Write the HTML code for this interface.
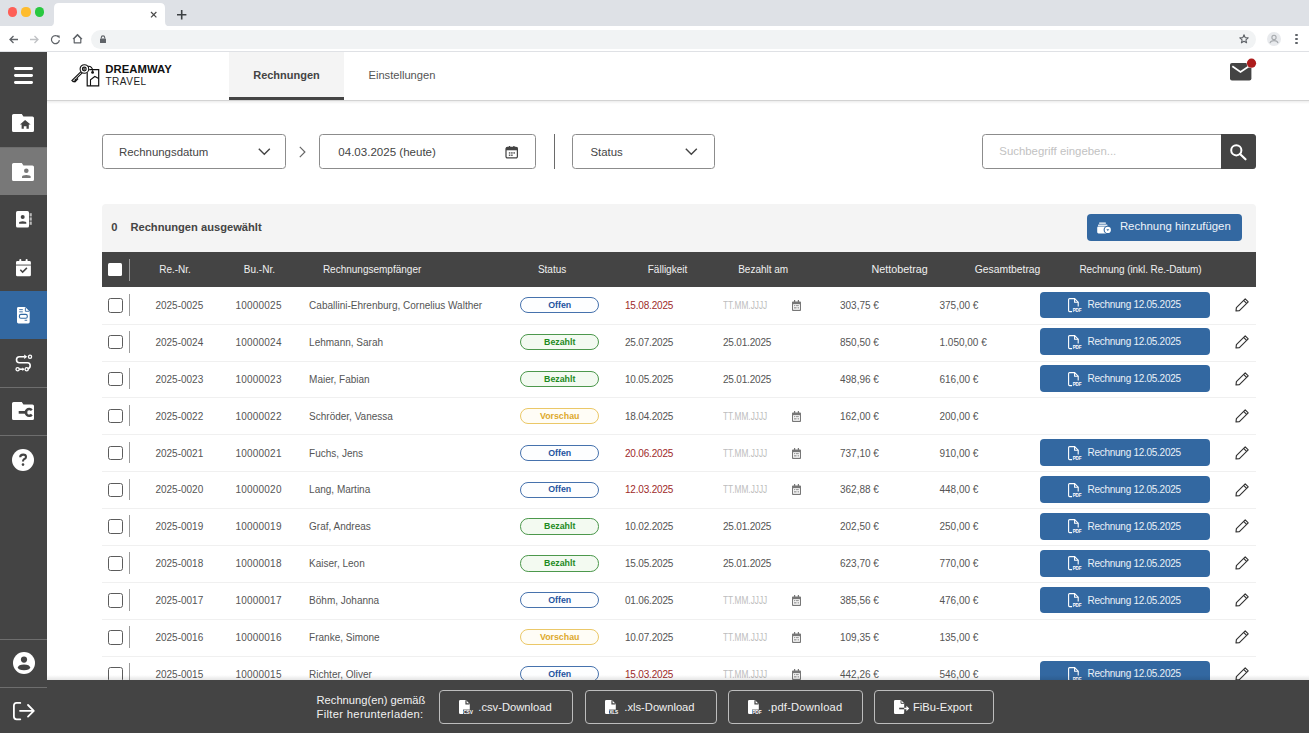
<!DOCTYPE html>
<html><head><meta charset="utf-8"><style>
*{box-sizing:border-box;margin:0;padding:0}
html,body{width:1309px;height:733px;overflow:hidden;background:#fff;font-family:"Liberation Sans",sans-serif;color:#444}
body{position:relative}
.a{position:absolute}
.t{position:absolute;white-space:nowrap;line-height:1}
svg{overflow:visible}
</style></head><body>
<div class="a" style="left:0px;top:0px;width:1309px;height:26px;background:#dee1e6"></div>
<div class="a" style="left:0px;top:26px;width:1309px;height:26px;background:#fff;border-bottom:1px solid #dfe1e5"></div>
<div class="a" style="left:7.800000000000001px;top:7.4px;width:9.2px;height:9.2px;background:#fe5f57;border-radius:50%"></div>
<div class="a" style="left:21.4px;top:7.4px;width:9.2px;height:9.2px;background:#febc2e;border-radius:50%"></div>
<div class="a" style="left:35.3px;top:7.4px;width:9.2px;height:9.2px;background:#28c840;border-radius:50%"></div>
<svg class="a" style="left:46px;top:3px;" width="127" height="24" viewBox="0 0 127 24"><path d="M3 23.5Q8 23.5 8 18.5V5Q8 0 13 0H114Q119 0 119 5V18.5Q119 23.5 124 23.5V24H3Z" fill="#fff"/></svg>
<svg class="a" style="left:151.1px;top:11.7px;" width="5.4" height="5.4" viewBox="0 0 5.4 5.4"><path d="M0 0L5.4 5.4M5.4 0L0 5.4" stroke="#4a4a4a" stroke-width="1.2"/></svg>
<svg class="a" style="left:177px;top:9.8px;" width="9.4" height="9.4" viewBox="0 0 9.4 9.4"><path d="M4.7 0V9.4M0 4.7H9.4" stroke="#3c4043" stroke-width="1.6"/></svg>
<svg class="a" style="left:8.5px;top:34.5px;" width="9" height="9" viewBox="0 0 9 9"><path d="M9 4.5H1M4.5 1L1 4.5L4.5 8" stroke="#5f6368" stroke-width="1.3" fill="none"/></svg>
<svg class="a" style="left:29.5px;top:34.5px;" width="9" height="9" viewBox="0 0 9 9"><path d="M0 4.5H8M4.5 1L8 4.5L4.5 8" stroke="#c0c2c5" stroke-width="1.3" fill="none"/></svg>
<svg class="a" style="left:51px;top:34.7px;" width="9" height="9" viewBox="0 0 9 9"><path d="M7.6 2.2A4 4 0 1 0 8.4 5.2" stroke="#5f6368" stroke-width="1.2" fill="none"/><path d="M5.6 0.4L8.6 0.4L8.6 3.4Z" fill="#5f6368"/></svg>
<svg class="a" style="left:72.5px;top:34.2px;" width="9" height="9.5" viewBox="0 0 9 9.5"><path d="M1.2 4.4L4.5 1L7.8 4.4V8.8H1.2Z" stroke="#5f6368" stroke-width="1.2" fill="none" stroke-linejoin="round"/><path d="M0 5.2L4.5 0.6L9 5.2" stroke="#5f6368" stroke-width="1.2" fill="none"/></svg>
<div class="a" style="left:91px;top:30px;width:1165px;height:19px;background:#f1f3f4;border-radius:9.5px"></div>
<svg class="a" style="left:99.5px;top:35px;" width="6" height="8" viewBox="0 0 6 8"><path d="M1.3 3.6V2.6A1.7 1.7 0 0 1 4.7 2.6V3.6" stroke="#5f6368" stroke-width="1.1" fill="none"/><rect x="0" y="3.4" width="6" height="4.6" rx="0.6" fill="#5f6368"/></svg>
<svg class="a" style="left:1238.8px;top:34px;" width="10" height="10" viewBox="0 0 10 10"><path d="M5 0.8L6.2 3.6L9.2 3.8L6.9 5.8L7.6 8.8L5 7.2L2.4 8.8L3.1 5.8L0.8 3.8L3.8 3.6Z" stroke="#5f6368" stroke-width="1.1" fill="none" stroke-linejoin="round"/></svg>
<div class="a" style="left:1267.4px;top:32px;width:14px;height:14px;background:#e8eaed;border-radius:50%"></div>
<svg class="a" style="left:1269.4px;top:34px;" width="10" height="10" viewBox="0 0 10 10"><circle cx="5" cy="3.4" r="2.1" stroke="#a6a9ad" stroke-width="1.1" fill="none"/><path d="M1 9.2Q1.5 6.6 5 6.6Q8.5 6.6 9 9.2" stroke="#a6a9ad" stroke-width="1.1" fill="none"/></svg>
<div class="a" style="left:1295.4px;top:34.3px;width:2.2px;height:2.2px;background:#5f6368;border-radius:50%"></div>
<div class="a" style="left:1295.4px;top:38.1px;width:2.2px;height:2.2px;background:#5f6368;border-radius:50%"></div>
<div class="a" style="left:1295.4px;top:41.9px;width:2.2px;height:2.2px;background:#5f6368;border-radius:50%"></div>
<div class="a" style="left:47px;top:52px;width:1262px;height:48px;background:#fff"></div>
<div class="a" style="left:47px;top:100px;width:1262px;height:1px;background:#d3d3d3"></div>
<div class="a" style="left:47px;top:101px;width:1262px;height:3px;background:linear-gradient(rgba(0,0,0,.07),rgba(0,0,0,0))"></div>
<svg class="a" style="left:71px;top:63.8px;" width="29" height="23" viewBox="0 0 29 23"><path d="M16.2 21.8V5.6H27.7V21.8Z" fill="none" stroke="#111" stroke-width="1.2"/><circle cx="13.4" cy="5" r="4.9" fill="#fff"/><g fill="none" stroke="#111" stroke-width="1.1"><circle cx="13.4" cy="5" r="4.3"/><circle cx="13.3" cy="5" r="1.9"/><path d="M12.2 3.9L14.4 6.1M14.4 3.9L12.2 6.1" stroke-width="0.8"/><path d="M10 7.6L0.9 16.5L2.2 17.8L3 17L3.9 17.9L4.9 16.9L4 16L4.8 15.2L5.7 16.1L6.7 15.1L5.8 14.2L11.2 8.8"/><path d="M16.8 2.3Q21 1.8 21.8 6.8"/><path d="M19.5 21.8V15.8L23.8 12.5L27.7 14.4"/></g><circle cx="21.6" cy="8.4" r="1.4" fill="#111"/></svg>
<div class="t" style="left:105.3px;top:63.93px;font-size:11.3px;color:#111;font-weight:700;letter-spacing:0.05px">DREAMWAY</div>
<div class="t" style="left:105.5px;top:76.83px;font-size:10px;color:#222;font-weight:400;letter-spacing:0.5px">TRAVEL</div>
<div class="a" style="left:229px;top:52px;width:115px;height:45px;background:#f4f4f4"></div>
<div class="a" style="left:229px;top:97px;width:115px;height:3px;background:#444"></div>
<div class="t" style="left:253.2px;top:69.69px;font-size:11px;color:#444;font-weight:700">Rechnungen</div>
<div class="t" style="left:368.5px;top:69.56px;font-size:11.15px;color:#555;font-weight:400">Einstellungen</div>
<svg class="a" style="left:1230.1px;top:63.2px;" width="22" height="18" viewBox="0 0 22 18"><rect x="0" y="0" width="21.4" height="17.5" rx="2" fill="#444"/><path d="M2.3 3.3L10.5 9L19 3.3" stroke="#fff" stroke-width="1.8" fill="none"/><circle cx="21.5" cy="0.2" r="4.9" fill="#fff"/><circle cx="21.5" cy="0.2" r="4.6" fill="#ad1c1c"/></svg>
<div class="a" style="left:0px;top:52px;width:47px;height:681px;background:#444444"></div>
<div class="a" style="left:13.7px;top:67.05000000000001px;width:19.3px;height:2.7px;background:#fff;border-radius:1.4px"></div>
<div class="a" style="left:13.7px;top:73.95px;width:19.3px;height:2.7px;background:#fff;border-radius:1.4px"></div>
<div class="a" style="left:13.7px;top:81.05000000000001px;width:19.3px;height:2.7px;background:#fff;border-radius:1.4px"></div>
<svg class="a" style="left:12.3px;top:114.1px;" width="22" height="18" viewBox="0 0 22 18"><path d="M1.6 0H9.8L11.4 2.5H20.4A1.6 1.6 0 0 1 22 4.1V16.4A1.6 1.6 0 0 1 20.4 18H1.6A1.6 1.6 0 0 1 0 16.4V1.6A1.6 1.6 0 0 1 1.6 0Z" fill="#fff"/><path d="M13.1 10.5L8 10.5L13.1 5.9L18.6 10.5H16.8V14.8H14.5V12.2H11.8V14.8H9.6V10.5" fill="#444444"/></svg>
<div class="a" style="left:0px;top:147px;width:47px;height:1px;background:#6e6e6e"></div>
<div class="a" style="left:0px;top:148px;width:47px;height:47px;background:#787878"></div>
<svg class="a" style="left:12.3px;top:163.1px;" width="22" height="18" viewBox="0 0 22 18"><path d="M1.6 0H9.8L11.4 2.5H20.4A1.6 1.6 0 0 1 22 4.1V16.4A1.6 1.6 0 0 1 20.4 18H1.6A1.6 1.6 0 0 1 0 16.4V1.6A1.6 1.6 0 0 1 1.6 0Z" fill="#fff"/><circle cx="14.3" cy="7.8" r="2.3" fill="#787878"/><path d="M10 14.9V13.6Q10 11.9 14.3 11.9Q18.6 11.9 18.6 13.6V14.9Z" fill="#787878"/></svg>
<svg class="a" style="left:16.1px;top:210.9px;" width="16" height="17" viewBox="0 0 16 17"><rect x="0" y="0" width="13" height="16.6" rx="1.6" fill="#fff"/><circle cx="6.7" cy="6.1" r="2" fill="#444444"/><path d="M3.1 12.7V11.7Q3.1 10.2 6.7 10.2Q10.3 10.2 10.3 11.7V12.7Z" fill="#444444"/><rect x="13.6" y="2.2" width="2.2" height="3.2" fill="#b9b9b9"/><rect x="13.6" y="6.4" width="2.2" height="3.2" fill="#b9b9b9"/><rect x="13.6" y="10.6" width="2.2" height="3.2" fill="#b9b9b9"/></svg>
<svg class="a" style="left:15.9px;top:258.6px;" width="15" height="17.5" viewBox="0 0 15 17.5"><path d="M1.4 2H13.5A1.4 1.4 0 0 1 14.9 3.4V15.9A1.4 1.4 0 0 1 13.5 17.3H1.4A1.4 1.4 0 0 1 0 15.9V3.4A1.4 1.4 0 0 1 1.4 2Z" fill="#fff"/><rect x="3.3" y="0" width="2" height="3.5" rx="1" fill="#fff"/><rect x="9.6" y="0" width="2" height="3.5" rx="1" fill="#fff"/><rect x="0" y="5.6" width="14.9" height="0.9" fill="#444444"/><path d="M4.3 10.8L6.6 13.1L10.9 8.9" stroke="#444444" stroke-width="1.5" fill="none"/></svg>
<div class="a" style="left:0px;top:291px;width:47px;height:48px;background:#3368a1"></div>
<svg class="a" style="left:16.8px;top:306.9px;" width="12.7" height="16.6" viewBox="0 0 12.7 16.6"><path d="M1.5 0H8.2L12.7 4.5V15.1A1.5 1.5 0 0 1 11.2 16.6H1.5A1.5 1.5 0 0 1 0 15.1V1.5A1.5 1.5 0 0 1 1.5 0Z" fill="#fff"/><path d="M8.4 0.6V4.3H12.1" stroke="#3368a1" stroke-width="0.9" fill="none"/><rect x="2.2" y="2.2" width="3.6" height="0.9" fill="#3368a1"/><rect x="2.2" y="4.4" width="3.6" height="0.9" fill="#3368a1"/><rect x="2.4" y="7.4" width="7.9" height="3.8" rx="1.5" stroke="#3368a1" stroke-width="1.1" fill="none"/><rect x="7.6" y="12.8" width="2.6" height="0.9" fill="#3368a1"/></svg>
<svg class="a" style="left:14.6px;top:354.2px;" width="18" height="18" viewBox="0 0 18 18"><g stroke="#fff" stroke-width="1.6" fill="none"><path d="M9.5 2.8H4.5Q1.5 2.8 1.5 5.8Q1.5 8.8 4.5 8.8H12.5Q15.2 8.8 15.2 11.8Q15.2 14.4 12.5 15"/><circle cx="15" cy="2.8" r="1.6" stroke-width="1.3"/><circle cx="2.6" cy="15.2" r="1.6" stroke-width="1.3"/><circle cx="11.7" cy="15.2" r="1.6" stroke-width="1.3"/><path d="M4.2 15.2H8.2"/></g><path d="M9.2 0.6L12.2 2.8L9.2 5Z" fill="#fff"/><path d="M7.4 13.4L9.6 15.2L7.4 17Z" fill="#fff"/></svg>
<div class="a" style="left:0px;top:387px;width:47px;height:1px;background:#6e6e6e"></div>
<svg class="a" style="left:12.3px;top:402.1px;" width="22" height="18" viewBox="0 0 22 18"><path d="M1.6 0H9.8L11.4 2.5H20.4A1.6 1.6 0 0 1 22 4.1V16.4A1.6 1.6 0 0 1 20.4 18H1.6A1.6 1.6 0 0 1 0 16.4V1.6A1.6 1.6 0 0 1 1.6 0Z" fill="#fff"/><rect x="6.7" y="9" width="8.6" height="2.7" fill="#444444"/><path d="M19.8 8.2A3.4 3.4 0 1 0 19.8 12.6" stroke="#444444" stroke-width="2.4" fill="none"/></svg>
<div class="a" style="left:0px;top:435px;width:47px;height:1px;background:#6e6e6e"></div>
<svg class="a" style="left:12.3px;top:449.1px;" width="22" height="22" viewBox="0 0 22 22"><circle cx="11" cy="11" r="11" fill="#fff"/><path d="M8.2 8.2Q8.2 5.6 11.2 5.6Q14 5.6 14 7.9Q14 9.5 11.9 10.3Q11 10.8 11 12.6" stroke="#444444" stroke-width="2.1" fill="none"/><circle cx="11" cy="15.6" r="1.3" fill="#444444"/></svg>
<div class="a" style="left:0px;top:639px;width:47px;height:1px;background:#6e6e6e"></div>
<svg class="a" style="left:12.5px;top:652px;" width="22" height="22" viewBox="0 0 22 22"><circle cx="11" cy="11" r="11" fill="#fff"/><circle cx="11" cy="7.6" r="3.1" fill="#444444"/><path d="M4.8 15.6Q5.4 12.4 11 12.4Q16.6 12.4 17.2 15.6Q16.6 18.2 11 18.2Q5.4 18.2 4.8 15.6Z" fill="#444444"/></svg>
<div class="a" style="left:0px;top:687px;width:47px;height:1px;background:#6e6e6e"></div>
<svg class="a" style="left:12.7px;top:702.3px;" width="22" height="18.5" viewBox="0 0 22 18.5"><g stroke="#fff" stroke-width="1.8" fill="none" stroke-linecap="round" stroke-linejoin="round"><path d="M7.3 0.9H3.6Q0.9 0.9 0.9 3.6V14.6Q0.9 17.3 3.6 17.3H7.3"/><path d="M7 8.8H20.6M15 3L20.8 8.8L15 14.6"/></g></svg>
<div class="a" style="left:102px;top:134px;width:184px;height:35px;border:1px solid #8c8c8c;border-radius:3.5px"></div>
<div class="t" style="left:119px;top:146.65px;font-size:11.4px;color:#444;font-weight:400">Rechnungsdatum</div>
<svg class="a" style="left:258px;top:147.5px;" width="12.6" height="7" viewBox="0 0 12.6 7"><path d="M0.8 0.8L6.3 6.2L11.8 0.8" stroke="#444" stroke-width="1.4" fill="none"/></svg>
<svg class="a" style="left:298.5px;top:145.5px;" width="7" height="12" viewBox="0 0 7 12"><path d="M0.8 0.8L5.9 6L0.8 11.2" stroke="#666" stroke-width="1.2" fill="none"/></svg>
<div class="a" style="left:319px;top:134px;width:217px;height:35px;border:1px solid #8c8c8c;border-radius:3.5px"></div>
<div class="t" style="left:338.3px;top:146.52px;font-size:11.55px;color:#444;font-weight:400">04.03.2025 (heute)</div>
<svg class="a" style="left:506.3px;top:145.9px;" width="12" height="12.5" viewBox="0 0 12 12.5"><g transform="scale(0.95)"><path d="M1.5 1.5H10.5A1.5 1.5 0 0 1 12 3V11A1.5 1.5 0 0 1 10.5 12.5H1.5A1.5 1.5 0 0 1 0 11V3A1.5 1.5 0 0 1 1.5 1.5Z" stroke="#444" stroke-width="1.3" fill="none"/><rect x="0" y="1.5" width="12" height="3" fill="#444"/><rect x="3" y="0" width="1.4" height="2.5" fill="#444"/><rect x="7.6" y="0" width="1.4" height="2.5" fill="#444"/><rect x="3" y="6.6" width="1.6" height="1.4" fill="#444"/><rect x="5.4" y="6.6" width="1.6" height="1.4" fill="#444"/><rect x="7.8" y="6.6" width="1.6" height="1.4" fill="#444"/><rect x="3" y="9" width="1.6" height="1.4" fill="#444"/><rect x="5.4" y="9" width="1.6" height="1.4" fill="#444"/></g></svg>
<div class="a" style="left:554px;top:134px;width:1px;height:35px;background:#6a6a6a"></div>
<div class="a" style="left:572px;top:134px;width:143px;height:35px;border:1px solid #8c8c8c;border-radius:3.5px"></div>
<div class="t" style="left:590.5px;top:146.65px;font-size:11.4px;color:#444;font-weight:400">Status</div>
<svg class="a" style="left:684.5px;top:147.5px;" width="12.6" height="7" viewBox="0 0 12.6 7"><path d="M0.8 0.8L6.3 6.2L11.8 0.8" stroke="#444" stroke-width="1.4" fill="none"/></svg>
<div class="a" style="left:982px;top:134px;width:274px;height:35px;border:1px solid #8c8c8c;border-radius:3.5px;overflow:hidden"></div>
<div class="a" style="left:1221px;top:134px;width:35px;height:35px;background:#444;border-radius:0 3.5px 3.5px 0"></div>
<div class="t" style="left:999.3px;top:146.45px;font-size:11.4px;color:#c2c2c2;font-weight:400">Suchbegriff eingeben...</div>
<svg class="a" style="left:1230px;top:144px;" width="16.5" height="16" viewBox="0 0 16.5 16"><circle cx="6.3" cy="6.3" r="5.1" stroke="#fff" stroke-width="2" fill="none"/><path d="M10 10L15.5 15.3" stroke="#fff" stroke-width="2.2" stroke-linecap="round"/></svg>
<div class="a" style="left:102px;top:203.5px;width:1154px;height:48.5px;background:#f4f4f4;border-radius:4px 4px 0 0"></div>
<div class="t" style="left:111.2px;top:222.12px;font-size:11.2px;color:#444;font-weight:700">0</div>
<div class="t" style="left:130.4px;top:222.16px;font-size:11.15px;color:#444;font-weight:700">Rechnungen ausgewählt</div>
<div class="a" style="left:1087px;top:213.8px;width:155px;height:27.2px;background:#3368a1;border-radius:4px"></div>
<svg class="a" style="left:1096.8px;top:221.6px;" width="15" height="12" viewBox="0 0 15 12"><rect x="2" y="0.4" width="7" height="1.3" rx="0.6" fill="#fff"/><rect x="1" y="2.5" width="9.5" height="1.5" rx="0.6" fill="#dfe8f2"/><rect x="0.2" y="4.4" width="10" height="7" rx="1.3" fill="#fff"/><circle cx="10.8" cy="7.9" r="4.2" fill="#3368a1"/><circle cx="10.8" cy="7.9" r="3.1" fill="#fff"/><path d="M9.3 7.2H12.3L10.8 9.1Z" fill="#3368a1"/></svg>
<div class="t" style="left:1119.9px;top:220.85px;font-size:11.4px;color:#eef3f9;font-weight:400">Rechnung hinzufügen</div>
<div class="a" style="left:102px;top:252px;width:1154px;height:35px;background:#444"></div>
<div class="a" style="left:108.3px;top:262.7px;width:14.2px;height:13px;background:#fff;border-radius:1.5px"></div>
<div class="a" style="left:129.2px;top:259px;width:1px;height:21.7px;background:#9a9a9a"></div>
<div class="t" style="left:175px;top:264.84px;font-size:10px;color:#f0f0f0;font-weight:400;transform:translateX(-50%)">Re.-Nr.</div>
<div class="t" style="left:259.4px;top:264.84px;font-size:10px;color:#f0f0f0;font-weight:400;transform:translateX(-50%)">Bu.-Nr.</div>
<div class="t" style="left:372.1px;top:264.84px;font-size:10px;color:#f0f0f0;font-weight:400;transform:translateX(-50%)">Rechnungsempfänger</div>
<div class="t" style="left:552.1px;top:264.84px;font-size:10px;color:#f0f0f0;font-weight:400;transform:translateX(-50%)">Status</div>
<div class="t" style="left:667.5px;top:264.84px;font-size:10px;color:#f0f0f0;font-weight:400;transform:translateX(-50%)">Fälligkeit</div>
<div class="t" style="left:763.2px;top:264.84px;font-size:10px;color:#f0f0f0;font-weight:400;transform:translateX(-50%)">Bezahlt am</div>
<div class="t" style="left:899.7px;top:264.20px;font-size:10.75px;color:#f0f0f0;font-weight:400;transform:translateX(-50%)">Nettobetrag</div>
<div class="t" style="left:1007.6px;top:264.54px;font-size:10.35px;color:#f0f0f0;font-weight:400;transform:translateX(-50%)">Gesamtbetrag</div>
<div class="t" style="left:1140.5px;top:264.84px;font-size:10px;color:#f0f0f0;font-weight:400;transform:translateX(-50%);letter-spacing:-0.07px">Rechnung (inkl. Re.-Datum)</div>
<div class="a" style="left:102px;top:323.6px;width:1154px;height:1px;background:#f0f0f0"></div>
<div class="a" style="left:108.2px;top:298.0px;width:14.4px;height:14.5px;border:1.5px solid #5c5c5c;border-radius:2.6px"></div>
<div class="a" style="left:129.3px;top:294.0px;width:1px;height:21.7px;background:#9c9c9c"></div>
<div class="t" style="left:179.3px;top:300.94px;font-size:10px;color:#555;font-weight:400;transform:translateX(-50%)">2025-0025</div>
<div class="t" style="left:258.6px;top:300.94px;font-size:10px;color:#555;font-weight:400;transform:translateX(-50%);letter-spacing:0.2px">10000025</div>
<div class="t" style="left:309.1px;top:300.94px;font-size:10px;color:#555;font-weight:400">Caballini-Ehrenburg, Cornelius Walther</div>
<div class="a" style="left:519.9px;top:297.00px;width:79.6px;height:16.3px;border:1px solid #4672ad;border-radius:8.2px;background:#fdfeff"></div>
<div class="t" style="left:559.7px;top:300.95px;font-size:8.8px;color:#1f54a0;font-weight:700;transform:translateX(-50%)">Offen</div>
<div class="t" style="left:625px;top:300.94px;font-size:10px;color:#9e2a2a;font-weight:400;letter-spacing:-0.19px">15.08.2025</div>
<div class="t" style="left:723px;top:300.94px;font-size:10px;color:#bdbdbd;font-weight:400;transform:scaleX(0.83);transform-origin:0 0">TT.MM.JJJJ</div>
<svg class="a" style="left:792px;top:299.9px;" width="9" height="11" viewBox="0 0 9 11"><path d="M0.9 1.4H8.1A0.9 0.9 0 0 1 9 2.3V10A0.9 0.9 0 0 1 8.1 10.9H0.9A0.9 0.9 0 0 1 0 10V2.3A0.9 0.9 0 0 1 0.9 1.4Z" fill="#777"/><rect x="2" y="0" width="1.2" height="2" fill="#777"/><rect x="5.8" y="0" width="1.2" height="2" fill="#777"/><rect x="1.1" y="4.2" width="6.8" height="5.6" fill="#fff"/><rect x="2" y="5.2" width="1.2" height="1" fill="#888"/><rect x="3.8" y="5.2" width="3" height="1" fill="#888"/><rect x="2" y="7" width="2.6" height="1.6" fill="#aaa"/><rect x="5.6" y="7" width="1.2" height="1.6" fill="#999"/></svg>
<div class="t" style="left:840px;top:300.94px;font-size:10px;color:#555;font-weight:400">303,75 €</div>
<div class="t" style="left:939.5px;top:300.94px;font-size:10px;color:#555;font-weight:400">375,00 €</div>
<div class="a" style="left:1040px;top:291.5px;width:170px;height:26.8px;background:#3368a1;border-radius:4px"></div>
<svg class="a" style="left:1067.5px;top:298.0px;" width="11" height="15" viewBox="0 0 11 15"><g fill="none" stroke="#fff" stroke-width="1.1"><path d="M4 13.6H1.6Q0.6 13.6 0.6 12.6V1.6Q0.6 0.6 1.6 0.6H6.6L10.2 4.2V8.6"/><path d="M6.6 0.6V4.2H10.2"/></g><text x="4.7" y="14.2" font-size="4.6" font-weight="700" fill="#fff" font-family="Liberation Sans" letter-spacing="-0.2">PDF</text></svg>
<div class="t" style="left:1087.5px;top:300.44px;font-size:10px;color:#eaf1f8;font-weight:400;letter-spacing:-0.27px">Rechnung 12.05.2025</div>
<svg class="a" style="left:1235.4px;top:298.0px;" width="14" height="14" viewBox="0 0 14 14"><g fill="none" stroke="#333" stroke-width="1.15" stroke-linejoin="round"><path d="M1 13L1.4 9.6L10.2 0.8L13.2 3.8L4.4 12.6Z"/><path d="M8.6 2.4L11.6 5.4"/></g></svg>
<div class="a" style="left:102px;top:360.5px;width:1154px;height:1px;background:#f0f0f0"></div>
<div class="a" style="left:108.2px;top:334.9px;width:14.4px;height:14.5px;border:1.5px solid #5c5c5c;border-radius:2.6px"></div>
<div class="a" style="left:129.3px;top:330.9px;width:1px;height:21.7px;background:#9c9c9c"></div>
<div class="t" style="left:179.3px;top:337.83px;font-size:10px;color:#555;font-weight:400;transform:translateX(-50%)">2025-0024</div>
<div class="t" style="left:258.6px;top:337.83px;font-size:10px;color:#555;font-weight:400;transform:translateX(-50%);letter-spacing:0.2px">10000024</div>
<div class="t" style="left:309.1px;top:337.83px;font-size:10px;color:#555;font-weight:400">Lehmann, Sarah</div>
<div class="a" style="left:519.9px;top:333.90px;width:79.6px;height:16.3px;border:1px solid #4c984c;border-radius:8.2px;background:#f3faf1"></div>
<div class="t" style="left:559.7px;top:337.85px;font-size:8.8px;color:#1f8a1f;font-weight:700;transform:translateX(-50%)">Bezahlt</div>
<div class="t" style="left:625px;top:337.83px;font-size:10px;color:#555;font-weight:400;letter-spacing:-0.19px">25.07.2025</div>
<div class="t" style="left:723px;top:337.83px;font-size:10px;color:#555;font-weight:400;letter-spacing:-0.19px">25.01.2025</div>
<div class="t" style="left:840px;top:337.83px;font-size:10px;color:#555;font-weight:400">850,50 €</div>
<div class="t" style="left:939.5px;top:337.83px;font-size:10px;color:#555;font-weight:400">1.050,00 €</div>
<div class="a" style="left:1040px;top:328.4px;width:170px;height:26.8px;background:#3368a1;border-radius:4px"></div>
<svg class="a" style="left:1067.5px;top:334.9px;" width="11" height="15" viewBox="0 0 11 15"><g fill="none" stroke="#fff" stroke-width="1.1"><path d="M4 13.6H1.6Q0.6 13.6 0.6 12.6V1.6Q0.6 0.6 1.6 0.6H6.6L10.2 4.2V8.6"/><path d="M6.6 0.6V4.2H10.2"/></g><text x="4.7" y="14.2" font-size="4.6" font-weight="700" fill="#fff" font-family="Liberation Sans" letter-spacing="-0.2">PDF</text></svg>
<div class="t" style="left:1087.5px;top:337.33px;font-size:10px;color:#eaf1f8;font-weight:400;letter-spacing:-0.27px">Rechnung 12.05.2025</div>
<svg class="a" style="left:1235.4px;top:334.9px;" width="14" height="14" viewBox="0 0 14 14"><g fill="none" stroke="#333" stroke-width="1.15" stroke-linejoin="round"><path d="M1 13L1.4 9.6L10.2 0.8L13.2 3.8L4.4 12.6Z"/><path d="M8.6 2.4L11.6 5.4"/></g></svg>
<div class="a" style="left:102px;top:397.4px;width:1154px;height:1px;background:#f0f0f0"></div>
<div class="a" style="left:108.2px;top:371.8px;width:14.4px;height:14.5px;border:1.5px solid #5c5c5c;border-radius:2.6px"></div>
<div class="a" style="left:129.3px;top:367.8px;width:1px;height:21.7px;background:#9c9c9c"></div>
<div class="t" style="left:179.3px;top:374.74px;font-size:10px;color:#555;font-weight:400;transform:translateX(-50%)">2025-0023</div>
<div class="t" style="left:258.6px;top:374.74px;font-size:10px;color:#555;font-weight:400;transform:translateX(-50%);letter-spacing:0.2px">10000023</div>
<div class="t" style="left:309.1px;top:374.74px;font-size:10px;color:#555;font-weight:400">Maier, Fabian</div>
<div class="a" style="left:519.9px;top:370.80px;width:79.6px;height:16.3px;border:1px solid #4c984c;border-radius:8.2px;background:#f3faf1"></div>
<div class="t" style="left:559.7px;top:374.75px;font-size:8.8px;color:#1f8a1f;font-weight:700;transform:translateX(-50%)">Bezahlt</div>
<div class="t" style="left:625px;top:374.74px;font-size:10px;color:#555;font-weight:400;letter-spacing:-0.19px">10.05.2025</div>
<div class="t" style="left:723px;top:374.74px;font-size:10px;color:#555;font-weight:400;letter-spacing:-0.19px">25.01.2025</div>
<div class="t" style="left:840px;top:374.74px;font-size:10px;color:#555;font-weight:400">498,96 €</div>
<div class="t" style="left:939.5px;top:374.74px;font-size:10px;color:#555;font-weight:400">616,00 €</div>
<div class="a" style="left:1040px;top:365.3px;width:170px;height:26.8px;background:#3368a1;border-radius:4px"></div>
<svg class="a" style="left:1067.5px;top:371.8px;" width="11" height="15" viewBox="0 0 11 15"><g fill="none" stroke="#fff" stroke-width="1.1"><path d="M4 13.6H1.6Q0.6 13.6 0.6 12.6V1.6Q0.6 0.6 1.6 0.6H6.6L10.2 4.2V8.6"/><path d="M6.6 0.6V4.2H10.2"/></g><text x="4.7" y="14.2" font-size="4.6" font-weight="700" fill="#fff" font-family="Liberation Sans" letter-spacing="-0.2">PDF</text></svg>
<div class="t" style="left:1087.5px;top:374.24px;font-size:10px;color:#eaf1f8;font-weight:400;letter-spacing:-0.27px">Rechnung 12.05.2025</div>
<svg class="a" style="left:1235.4px;top:371.8px;" width="14" height="14" viewBox="0 0 14 14"><g fill="none" stroke="#333" stroke-width="1.15" stroke-linejoin="round"><path d="M1 13L1.4 9.6L10.2 0.8L13.2 3.8L4.4 12.6Z"/><path d="M8.6 2.4L11.6 5.4"/></g></svg>
<div class="a" style="left:102px;top:434.3px;width:1154px;height:1px;background:#f0f0f0"></div>
<div class="a" style="left:108.2px;top:408.7px;width:14.4px;height:14.5px;border:1.5px solid #5c5c5c;border-radius:2.6px"></div>
<div class="a" style="left:129.3px;top:404.7px;width:1px;height:21.7px;background:#9c9c9c"></div>
<div class="t" style="left:179.3px;top:411.63px;font-size:10px;color:#555;font-weight:400;transform:translateX(-50%)">2025-0022</div>
<div class="t" style="left:258.6px;top:411.63px;font-size:10px;color:#555;font-weight:400;transform:translateX(-50%);letter-spacing:0.2px">10000022</div>
<div class="t" style="left:309.1px;top:411.63px;font-size:10px;color:#555;font-weight:400">Schröder, Vanessa</div>
<div class="a" style="left:519.9px;top:407.70px;width:79.6px;height:16.3px;border:1px solid #ebc868;border-radius:8.2px;background:#fffdf6"></div>
<div class="t" style="left:559.7px;top:411.65px;font-size:8.8px;color:#dda92c;font-weight:700;transform:translateX(-50%)">Vorschau</div>
<div class="t" style="left:625px;top:411.63px;font-size:10px;color:#555;font-weight:400;letter-spacing:-0.19px">18.04.2025</div>
<div class="t" style="left:723px;top:411.63px;font-size:10px;color:#bdbdbd;font-weight:400;transform:scaleX(0.83);transform-origin:0 0">TT.MM.JJJJ</div>
<svg class="a" style="left:792px;top:410.59999999999997px;" width="9" height="11" viewBox="0 0 9 11"><path d="M0.9 1.4H8.1A0.9 0.9 0 0 1 9 2.3V10A0.9 0.9 0 0 1 8.1 10.9H0.9A0.9 0.9 0 0 1 0 10V2.3A0.9 0.9 0 0 1 0.9 1.4Z" fill="#777"/><rect x="2" y="0" width="1.2" height="2" fill="#777"/><rect x="5.8" y="0" width="1.2" height="2" fill="#777"/><rect x="1.1" y="4.2" width="6.8" height="5.6" fill="#fff"/><rect x="2" y="5.2" width="1.2" height="1" fill="#888"/><rect x="3.8" y="5.2" width="3" height="1" fill="#888"/><rect x="2" y="7" width="2.6" height="1.6" fill="#aaa"/><rect x="5.6" y="7" width="1.2" height="1.6" fill="#999"/></svg>
<div class="t" style="left:840px;top:411.63px;font-size:10px;color:#555;font-weight:400">162,00 €</div>
<div class="t" style="left:939.5px;top:411.63px;font-size:10px;color:#555;font-weight:400">200,00 €</div>
<svg class="a" style="left:1235.4px;top:408.7px;" width="14" height="14" viewBox="0 0 14 14"><g fill="none" stroke="#333" stroke-width="1.15" stroke-linejoin="round"><path d="M1 13L1.4 9.6L10.2 0.8L13.2 3.8L4.4 12.6Z"/><path d="M8.6 2.4L11.6 5.4"/></g></svg>
<div class="a" style="left:102px;top:471.2px;width:1154px;height:1px;background:#f0f0f0"></div>
<div class="a" style="left:108.2px;top:445.6px;width:14.4px;height:14.5px;border:1.5px solid #5c5c5c;border-radius:2.6px"></div>
<div class="a" style="left:129.3px;top:441.6px;width:1px;height:21.7px;background:#9c9c9c"></div>
<div class="t" style="left:179.3px;top:448.54px;font-size:10px;color:#555;font-weight:400;transform:translateX(-50%)">2025-0021</div>
<div class="t" style="left:258.6px;top:448.54px;font-size:10px;color:#555;font-weight:400;transform:translateX(-50%);letter-spacing:0.2px">10000021</div>
<div class="t" style="left:309.1px;top:448.54px;font-size:10px;color:#555;font-weight:400">Fuchs, Jens</div>
<div class="a" style="left:519.9px;top:444.60px;width:79.6px;height:16.3px;border:1px solid #4672ad;border-radius:8.2px;background:#fdfeff"></div>
<div class="t" style="left:559.7px;top:448.55px;font-size:8.8px;color:#1f54a0;font-weight:700;transform:translateX(-50%)">Offen</div>
<div class="t" style="left:625px;top:448.54px;font-size:10px;color:#9e2a2a;font-weight:400;letter-spacing:-0.19px">20.06.2025</div>
<div class="t" style="left:723px;top:448.54px;font-size:10px;color:#bdbdbd;font-weight:400;transform:scaleX(0.83);transform-origin:0 0">TT.MM.JJJJ</div>
<svg class="a" style="left:792px;top:447.5px;" width="9" height="11" viewBox="0 0 9 11"><path d="M0.9 1.4H8.1A0.9 0.9 0 0 1 9 2.3V10A0.9 0.9 0 0 1 8.1 10.9H0.9A0.9 0.9 0 0 1 0 10V2.3A0.9 0.9 0 0 1 0.9 1.4Z" fill="#777"/><rect x="2" y="0" width="1.2" height="2" fill="#777"/><rect x="5.8" y="0" width="1.2" height="2" fill="#777"/><rect x="1.1" y="4.2" width="6.8" height="5.6" fill="#fff"/><rect x="2" y="5.2" width="1.2" height="1" fill="#888"/><rect x="3.8" y="5.2" width="3" height="1" fill="#888"/><rect x="2" y="7" width="2.6" height="1.6" fill="#aaa"/><rect x="5.6" y="7" width="1.2" height="1.6" fill="#999"/></svg>
<div class="t" style="left:840px;top:448.54px;font-size:10px;color:#555;font-weight:400">737,10 €</div>
<div class="t" style="left:939.5px;top:448.54px;font-size:10px;color:#555;font-weight:400">910,00 €</div>
<div class="a" style="left:1040px;top:439.1px;width:170px;height:26.8px;background:#3368a1;border-radius:4px"></div>
<svg class="a" style="left:1067.5px;top:445.6px;" width="11" height="15" viewBox="0 0 11 15"><g fill="none" stroke="#fff" stroke-width="1.1"><path d="M4 13.6H1.6Q0.6 13.6 0.6 12.6V1.6Q0.6 0.6 1.6 0.6H6.6L10.2 4.2V8.6"/><path d="M6.6 0.6V4.2H10.2"/></g><text x="4.7" y="14.2" font-size="4.6" font-weight="700" fill="#fff" font-family="Liberation Sans" letter-spacing="-0.2">PDF</text></svg>
<div class="t" style="left:1087.5px;top:448.04px;font-size:10px;color:#eaf1f8;font-weight:400;letter-spacing:-0.27px">Rechnung 12.05.2025</div>
<svg class="a" style="left:1235.4px;top:445.6px;" width="14" height="14" viewBox="0 0 14 14"><g fill="none" stroke="#333" stroke-width="1.15" stroke-linejoin="round"><path d="M1 13L1.4 9.6L10.2 0.8L13.2 3.8L4.4 12.6Z"/><path d="M8.6 2.4L11.6 5.4"/></g></svg>
<div class="a" style="left:102px;top:508.1px;width:1154px;height:1px;background:#f0f0f0"></div>
<div class="a" style="left:108.2px;top:482.5px;width:14.4px;height:14.5px;border:1.5px solid #5c5c5c;border-radius:2.6px"></div>
<div class="a" style="left:129.3px;top:478.5px;width:1px;height:21.7px;background:#9c9c9c"></div>
<div class="t" style="left:179.3px;top:485.44px;font-size:10px;color:#555;font-weight:400;transform:translateX(-50%)">2025-0020</div>
<div class="t" style="left:258.6px;top:485.44px;font-size:10px;color:#555;font-weight:400;transform:translateX(-50%);letter-spacing:0.2px">10000020</div>
<div class="t" style="left:309.1px;top:485.44px;font-size:10px;color:#555;font-weight:400">Lang, Martina</div>
<div class="a" style="left:519.9px;top:481.50px;width:79.6px;height:16.3px;border:1px solid #4672ad;border-radius:8.2px;background:#fdfeff"></div>
<div class="t" style="left:559.7px;top:485.45px;font-size:8.8px;color:#1f54a0;font-weight:700;transform:translateX(-50%)">Offen</div>
<div class="t" style="left:625px;top:485.44px;font-size:10px;color:#9e2a2a;font-weight:400;letter-spacing:-0.19px">12.03.2025</div>
<div class="t" style="left:723px;top:485.44px;font-size:10px;color:#bdbdbd;font-weight:400;transform:scaleX(0.83);transform-origin:0 0">TT.MM.JJJJ</div>
<svg class="a" style="left:792px;top:484.4px;" width="9" height="11" viewBox="0 0 9 11"><path d="M0.9 1.4H8.1A0.9 0.9 0 0 1 9 2.3V10A0.9 0.9 0 0 1 8.1 10.9H0.9A0.9 0.9 0 0 1 0 10V2.3A0.9 0.9 0 0 1 0.9 1.4Z" fill="#777"/><rect x="2" y="0" width="1.2" height="2" fill="#777"/><rect x="5.8" y="0" width="1.2" height="2" fill="#777"/><rect x="1.1" y="4.2" width="6.8" height="5.6" fill="#fff"/><rect x="2" y="5.2" width="1.2" height="1" fill="#888"/><rect x="3.8" y="5.2" width="3" height="1" fill="#888"/><rect x="2" y="7" width="2.6" height="1.6" fill="#aaa"/><rect x="5.6" y="7" width="1.2" height="1.6" fill="#999"/></svg>
<div class="t" style="left:840px;top:485.44px;font-size:10px;color:#555;font-weight:400">362,88 €</div>
<div class="t" style="left:939.5px;top:485.44px;font-size:10px;color:#555;font-weight:400">448,00 €</div>
<div class="a" style="left:1040px;top:476.0px;width:170px;height:26.8px;background:#3368a1;border-radius:4px"></div>
<svg class="a" style="left:1067.5px;top:482.5px;" width="11" height="15" viewBox="0 0 11 15"><g fill="none" stroke="#fff" stroke-width="1.1"><path d="M4 13.6H1.6Q0.6 13.6 0.6 12.6V1.6Q0.6 0.6 1.6 0.6H6.6L10.2 4.2V8.6"/><path d="M6.6 0.6V4.2H10.2"/></g><text x="4.7" y="14.2" font-size="4.6" font-weight="700" fill="#fff" font-family="Liberation Sans" letter-spacing="-0.2">PDF</text></svg>
<div class="t" style="left:1087.5px;top:484.94px;font-size:10px;color:#eaf1f8;font-weight:400;letter-spacing:-0.27px">Rechnung 12.05.2025</div>
<svg class="a" style="left:1235.4px;top:482.5px;" width="14" height="14" viewBox="0 0 14 14"><g fill="none" stroke="#333" stroke-width="1.15" stroke-linejoin="round"><path d="M1 13L1.4 9.6L10.2 0.8L13.2 3.8L4.4 12.6Z"/><path d="M8.6 2.4L11.6 5.4"/></g></svg>
<div class="a" style="left:102px;top:545.0px;width:1154px;height:1px;background:#f0f0f0"></div>
<div class="a" style="left:108.2px;top:519.4px;width:14.4px;height:14.5px;border:1.5px solid #5c5c5c;border-radius:2.6px"></div>
<div class="a" style="left:129.3px;top:515.4px;width:1px;height:21.7px;background:#9c9c9c"></div>
<div class="t" style="left:179.3px;top:522.33px;font-size:10px;color:#555;font-weight:400;transform:translateX(-50%)">2025-0019</div>
<div class="t" style="left:258.6px;top:522.33px;font-size:10px;color:#555;font-weight:400;transform:translateX(-50%);letter-spacing:0.2px">10000019</div>
<div class="t" style="left:309.1px;top:522.33px;font-size:10px;color:#555;font-weight:400">Graf, Andreas</div>
<div class="a" style="left:519.9px;top:518.40px;width:79.6px;height:16.3px;border:1px solid #4c984c;border-radius:8.2px;background:#f3faf1"></div>
<div class="t" style="left:559.7px;top:522.35px;font-size:8.8px;color:#1f8a1f;font-weight:700;transform:translateX(-50%)">Bezahlt</div>
<div class="t" style="left:625px;top:522.33px;font-size:10px;color:#555;font-weight:400;letter-spacing:-0.19px">10.02.2025</div>
<div class="t" style="left:723px;top:522.33px;font-size:10px;color:#555;font-weight:400;letter-spacing:-0.19px">25.01.2025</div>
<div class="t" style="left:840px;top:522.33px;font-size:10px;color:#555;font-weight:400">202,50 €</div>
<div class="t" style="left:939.5px;top:522.33px;font-size:10px;color:#555;font-weight:400">250,00 €</div>
<div class="a" style="left:1040px;top:512.9px;width:170px;height:26.8px;background:#3368a1;border-radius:4px"></div>
<svg class="a" style="left:1067.5px;top:519.4px;" width="11" height="15" viewBox="0 0 11 15"><g fill="none" stroke="#fff" stroke-width="1.1"><path d="M4 13.6H1.6Q0.6 13.6 0.6 12.6V1.6Q0.6 0.6 1.6 0.6H6.6L10.2 4.2V8.6"/><path d="M6.6 0.6V4.2H10.2"/></g><text x="4.7" y="14.2" font-size="4.6" font-weight="700" fill="#fff" font-family="Liberation Sans" letter-spacing="-0.2">PDF</text></svg>
<div class="t" style="left:1087.5px;top:521.83px;font-size:10px;color:#eaf1f8;font-weight:400;letter-spacing:-0.27px">Rechnung 12.05.2025</div>
<svg class="a" style="left:1235.4px;top:519.4px;" width="14" height="14" viewBox="0 0 14 14"><g fill="none" stroke="#333" stroke-width="1.15" stroke-linejoin="round"><path d="M1 13L1.4 9.6L10.2 0.8L13.2 3.8L4.4 12.6Z"/><path d="M8.6 2.4L11.6 5.4"/></g></svg>
<div class="a" style="left:102px;top:581.9px;width:1154px;height:1px;background:#f0f0f0"></div>
<div class="a" style="left:108.2px;top:556.3px;width:14.4px;height:14.5px;border:1.5px solid #5c5c5c;border-radius:2.6px"></div>
<div class="a" style="left:129.3px;top:552.3px;width:1px;height:21.7px;background:#9c9c9c"></div>
<div class="t" style="left:179.3px;top:559.23px;font-size:10px;color:#555;font-weight:400;transform:translateX(-50%)">2025-0018</div>
<div class="t" style="left:258.6px;top:559.23px;font-size:10px;color:#555;font-weight:400;transform:translateX(-50%);letter-spacing:0.2px">10000018</div>
<div class="t" style="left:309.1px;top:559.23px;font-size:10px;color:#555;font-weight:400">Kaiser, Leon</div>
<div class="a" style="left:519.9px;top:555.30px;width:79.6px;height:16.3px;border:1px solid #4c984c;border-radius:8.2px;background:#f3faf1"></div>
<div class="t" style="left:559.7px;top:559.25px;font-size:8.8px;color:#1f8a1f;font-weight:700;transform:translateX(-50%)">Bezahlt</div>
<div class="t" style="left:625px;top:559.23px;font-size:10px;color:#555;font-weight:400;letter-spacing:-0.19px">15.05.2025</div>
<div class="t" style="left:723px;top:559.23px;font-size:10px;color:#555;font-weight:400;letter-spacing:-0.19px">25.01.2025</div>
<div class="t" style="left:840px;top:559.23px;font-size:10px;color:#555;font-weight:400">623,70 €</div>
<div class="t" style="left:939.5px;top:559.23px;font-size:10px;color:#555;font-weight:400">770,00 €</div>
<div class="a" style="left:1040px;top:549.8px;width:170px;height:26.8px;background:#3368a1;border-radius:4px"></div>
<svg class="a" style="left:1067.5px;top:556.3px;" width="11" height="15" viewBox="0 0 11 15"><g fill="none" stroke="#fff" stroke-width="1.1"><path d="M4 13.6H1.6Q0.6 13.6 0.6 12.6V1.6Q0.6 0.6 1.6 0.6H6.6L10.2 4.2V8.6"/><path d="M6.6 0.6V4.2H10.2"/></g><text x="4.7" y="14.2" font-size="4.6" font-weight="700" fill="#fff" font-family="Liberation Sans" letter-spacing="-0.2">PDF</text></svg>
<div class="t" style="left:1087.5px;top:558.73px;font-size:10px;color:#eaf1f8;font-weight:400;letter-spacing:-0.27px">Rechnung 12.05.2025</div>
<svg class="a" style="left:1235.4px;top:556.3px;" width="14" height="14" viewBox="0 0 14 14"><g fill="none" stroke="#333" stroke-width="1.15" stroke-linejoin="round"><path d="M1 13L1.4 9.6L10.2 0.8L13.2 3.8L4.4 12.6Z"/><path d="M8.6 2.4L11.6 5.4"/></g></svg>
<div class="a" style="left:102px;top:618.8px;width:1154px;height:1px;background:#f0f0f0"></div>
<div class="a" style="left:108.2px;top:593.2px;width:14.4px;height:14.5px;border:1.5px solid #5c5c5c;border-radius:2.6px"></div>
<div class="a" style="left:129.3px;top:589.2px;width:1px;height:21.7px;background:#9c9c9c"></div>
<div class="t" style="left:179.3px;top:596.13px;font-size:10px;color:#555;font-weight:400;transform:translateX(-50%)">2025-0017</div>
<div class="t" style="left:258.6px;top:596.13px;font-size:10px;color:#555;font-weight:400;transform:translateX(-50%);letter-spacing:0.2px">10000017</div>
<div class="t" style="left:309.1px;top:596.13px;font-size:10px;color:#555;font-weight:400">Böhm, Johanna</div>
<div class="a" style="left:519.9px;top:592.20px;width:79.6px;height:16.3px;border:1px solid #4672ad;border-radius:8.2px;background:#fdfeff"></div>
<div class="t" style="left:559.7px;top:596.15px;font-size:8.8px;color:#1f54a0;font-weight:700;transform:translateX(-50%)">Offen</div>
<div class="t" style="left:625px;top:596.13px;font-size:10px;color:#555;font-weight:400;letter-spacing:-0.19px">01.06.2025</div>
<div class="t" style="left:723px;top:596.13px;font-size:10px;color:#bdbdbd;font-weight:400;transform:scaleX(0.83);transform-origin:0 0">TT.MM.JJJJ</div>
<svg class="a" style="left:792px;top:595.1px;" width="9" height="11" viewBox="0 0 9 11"><path d="M0.9 1.4H8.1A0.9 0.9 0 0 1 9 2.3V10A0.9 0.9 0 0 1 8.1 10.9H0.9A0.9 0.9 0 0 1 0 10V2.3A0.9 0.9 0 0 1 0.9 1.4Z" fill="#777"/><rect x="2" y="0" width="1.2" height="2" fill="#777"/><rect x="5.8" y="0" width="1.2" height="2" fill="#777"/><rect x="1.1" y="4.2" width="6.8" height="5.6" fill="#fff"/><rect x="2" y="5.2" width="1.2" height="1" fill="#888"/><rect x="3.8" y="5.2" width="3" height="1" fill="#888"/><rect x="2" y="7" width="2.6" height="1.6" fill="#aaa"/><rect x="5.6" y="7" width="1.2" height="1.6" fill="#999"/></svg>
<div class="t" style="left:840px;top:596.13px;font-size:10px;color:#555;font-weight:400">385,56 €</div>
<div class="t" style="left:939.5px;top:596.13px;font-size:10px;color:#555;font-weight:400">476,00 €</div>
<div class="a" style="left:1040px;top:586.7px;width:170px;height:26.8px;background:#3368a1;border-radius:4px"></div>
<svg class="a" style="left:1067.5px;top:593.2px;" width="11" height="15" viewBox="0 0 11 15"><g fill="none" stroke="#fff" stroke-width="1.1"><path d="M4 13.6H1.6Q0.6 13.6 0.6 12.6V1.6Q0.6 0.6 1.6 0.6H6.6L10.2 4.2V8.6"/><path d="M6.6 0.6V4.2H10.2"/></g><text x="4.7" y="14.2" font-size="4.6" font-weight="700" fill="#fff" font-family="Liberation Sans" letter-spacing="-0.2">PDF</text></svg>
<div class="t" style="left:1087.5px;top:595.63px;font-size:10px;color:#eaf1f8;font-weight:400;letter-spacing:-0.27px">Rechnung 12.05.2025</div>
<svg class="a" style="left:1235.4px;top:593.2px;" width="14" height="14" viewBox="0 0 14 14"><g fill="none" stroke="#333" stroke-width="1.15" stroke-linejoin="round"><path d="M1 13L1.4 9.6L10.2 0.8L13.2 3.8L4.4 12.6Z"/><path d="M8.6 2.4L11.6 5.4"/></g></svg>
<div class="a" style="left:102px;top:655.7px;width:1154px;height:1px;background:#f0f0f0"></div>
<div class="a" style="left:108.2px;top:630.0999999999999px;width:14.4px;height:14.5px;border:1.5px solid #5c5c5c;border-radius:2.6px"></div>
<div class="a" style="left:129.3px;top:626.0999999999999px;width:1px;height:21.7px;background:#9c9c9c"></div>
<div class="t" style="left:179.3px;top:633.03px;font-size:10px;color:#555;font-weight:400;transform:translateX(-50%)">2025-0016</div>
<div class="t" style="left:258.6px;top:633.03px;font-size:10px;color:#555;font-weight:400;transform:translateX(-50%);letter-spacing:0.2px">10000016</div>
<div class="t" style="left:309.1px;top:633.03px;font-size:10px;color:#555;font-weight:400">Franke, Simone</div>
<div class="a" style="left:519.9px;top:629.10px;width:79.6px;height:16.3px;border:1px solid #ebc868;border-radius:8.2px;background:#fffdf6"></div>
<div class="t" style="left:559.7px;top:633.05px;font-size:8.8px;color:#dda92c;font-weight:700;transform:translateX(-50%)">Vorschau</div>
<div class="t" style="left:625px;top:633.03px;font-size:10px;color:#555;font-weight:400;letter-spacing:-0.19px">10.07.2025</div>
<div class="t" style="left:723px;top:633.03px;font-size:10px;color:#bdbdbd;font-weight:400;transform:scaleX(0.83);transform-origin:0 0">TT.MM.JJJJ</div>
<svg class="a" style="left:792px;top:631.9999999999999px;" width="9" height="11" viewBox="0 0 9 11"><path d="M0.9 1.4H8.1A0.9 0.9 0 0 1 9 2.3V10A0.9 0.9 0 0 1 8.1 10.9H0.9A0.9 0.9 0 0 1 0 10V2.3A0.9 0.9 0 0 1 0.9 1.4Z" fill="#777"/><rect x="2" y="0" width="1.2" height="2" fill="#777"/><rect x="5.8" y="0" width="1.2" height="2" fill="#777"/><rect x="1.1" y="4.2" width="6.8" height="5.6" fill="#fff"/><rect x="2" y="5.2" width="1.2" height="1" fill="#888"/><rect x="3.8" y="5.2" width="3" height="1" fill="#888"/><rect x="2" y="7" width="2.6" height="1.6" fill="#aaa"/><rect x="5.6" y="7" width="1.2" height="1.6" fill="#999"/></svg>
<div class="t" style="left:840px;top:633.03px;font-size:10px;color:#555;font-weight:400">109,35 €</div>
<div class="t" style="left:939.5px;top:633.03px;font-size:10px;color:#555;font-weight:400">135,00 €</div>
<svg class="a" style="left:1235.4px;top:630.0999999999999px;" width="14" height="14" viewBox="0 0 14 14"><g fill="none" stroke="#333" stroke-width="1.15" stroke-linejoin="round"><path d="M1 13L1.4 9.6L10.2 0.8L13.2 3.8L4.4 12.6Z"/><path d="M8.6 2.4L11.6 5.4"/></g></svg>
<div class="a" style="left:102px;top:692.6px;width:1154px;height:1px;background:#f0f0f0"></div>
<div class="a" style="left:108.2px;top:667.0px;width:14.4px;height:14.5px;border:1.5px solid #5c5c5c;border-radius:2.6px"></div>
<div class="a" style="left:129.3px;top:663.0px;width:1px;height:21.7px;background:#9c9c9c"></div>
<div class="t" style="left:179.3px;top:669.93px;font-size:10px;color:#555;font-weight:400;transform:translateX(-50%)">2025-0015</div>
<div class="t" style="left:258.6px;top:669.93px;font-size:10px;color:#555;font-weight:400;transform:translateX(-50%);letter-spacing:0.2px">10000015</div>
<div class="t" style="left:309.1px;top:669.93px;font-size:10px;color:#555;font-weight:400">Richter, Oliver</div>
<div class="a" style="left:519.9px;top:666.00px;width:79.6px;height:16.3px;border:1px solid #4672ad;border-radius:8.2px;background:#fdfeff"></div>
<div class="t" style="left:559.7px;top:669.95px;font-size:8.8px;color:#1f54a0;font-weight:700;transform:translateX(-50%)">Offen</div>
<div class="t" style="left:625px;top:669.93px;font-size:10px;color:#9e2a2a;font-weight:400;letter-spacing:-0.19px">15.03.2025</div>
<div class="t" style="left:723px;top:669.93px;font-size:10px;color:#bdbdbd;font-weight:400;transform:scaleX(0.83);transform-origin:0 0">TT.MM.JJJJ</div>
<svg class="a" style="left:792px;top:668.9px;" width="9" height="11" viewBox="0 0 9 11"><path d="M0.9 1.4H8.1A0.9 0.9 0 0 1 9 2.3V10A0.9 0.9 0 0 1 8.1 10.9H0.9A0.9 0.9 0 0 1 0 10V2.3A0.9 0.9 0 0 1 0.9 1.4Z" fill="#777"/><rect x="2" y="0" width="1.2" height="2" fill="#777"/><rect x="5.8" y="0" width="1.2" height="2" fill="#777"/><rect x="1.1" y="4.2" width="6.8" height="5.6" fill="#fff"/><rect x="2" y="5.2" width="1.2" height="1" fill="#888"/><rect x="3.8" y="5.2" width="3" height="1" fill="#888"/><rect x="2" y="7" width="2.6" height="1.6" fill="#aaa"/><rect x="5.6" y="7" width="1.2" height="1.6" fill="#999"/></svg>
<div class="t" style="left:840px;top:669.93px;font-size:10px;color:#555;font-weight:400">442,26 €</div>
<div class="t" style="left:939.5px;top:669.93px;font-size:10px;color:#555;font-weight:400">546,00 €</div>
<div class="a" style="left:1040px;top:660.5px;width:170px;height:26.8px;background:#3368a1;border-radius:4px"></div>
<svg class="a" style="left:1067.5px;top:667.0px;" width="11" height="15" viewBox="0 0 11 15"><g fill="none" stroke="#fff" stroke-width="1.1"><path d="M4 13.6H1.6Q0.6 13.6 0.6 12.6V1.6Q0.6 0.6 1.6 0.6H6.6L10.2 4.2V8.6"/><path d="M6.6 0.6V4.2H10.2"/></g><text x="4.7" y="14.2" font-size="4.6" font-weight="700" fill="#fff" font-family="Liberation Sans" letter-spacing="-0.2">PDF</text></svg>
<div class="t" style="left:1087.5px;top:669.43px;font-size:10px;color:#eaf1f8;font-weight:400;letter-spacing:-0.27px">Rechnung 12.05.2025</div>
<svg class="a" style="left:1235.4px;top:667.0px;" width="14" height="14" viewBox="0 0 14 14"><g fill="none" stroke="#333" stroke-width="1.15" stroke-linejoin="round"><path d="M1 13L1.4 9.6L10.2 0.8L13.2 3.8L4.4 12.6Z"/><path d="M8.6 2.4L11.6 5.4"/></g></svg>
<div class="a" style="left:47px;top:675px;width:1262px;height:5px;background:linear-gradient(rgba(0,0,0,0),rgba(0,0,0,.10))"></div>
<div class="a" style="left:47px;top:679.6px;width:1262px;height:53.4px;background:#444"></div>
<div class="t" style="left:316.5px;top:694.82px;font-size:11.2px;color:#f2f2f2;font-weight:400">Rechnung(en) gemäß</div>
<div class="t" style="left:316.5px;top:708.62px;font-size:11.2px;color:#f2f2f2;font-weight:400;letter-spacing:0.33px">Filter herunterladen:</div>
<div class="a" style="left:439.1px;top:690.3px;width:133.6px;height:34px;border:1px solid #bdbdbd;border-radius:4px"></div>
<svg class="a" style="left:458.8px;top:700px;" width="15" height="14.5" viewBox="0 0 15 14.5"><path d="M1.3 0H6.9L10.8 3.9V12.7A1.3 1.3 0 0 1 9.5 14H1.3A1.3 1.3 0 0 1 0 12.7V1.3A1.3 1.3 0 0 1 1.3 0Z" fill="#fff"/><path d="M7 0.3V3.8H10.5" stroke="#444" stroke-width="1.2" fill="none"/><rect x="4" y="9.6" width="11" height="5" fill="#444"/><text x="4.2" y="14.2" font-size="4.8" font-weight="700" fill="#fff" font-family="Liberation Sans" letter-spacing="-0.1">CSV</text></svg>
<div class="t" style="left:478.3px;top:701.72px;font-size:11.2px;color:#f0f0f0;font-weight:400">.csv-Download</div>
<div class="a" style="left:584.8px;top:690.3px;width:132.2px;height:34px;border:1px solid #bdbdbd;border-radius:4px"></div>
<svg class="a" style="left:605px;top:700px;" width="15" height="14.5" viewBox="0 0 15 14.5"><path d="M1.3 0H6.9L10.8 3.9V12.7A1.3 1.3 0 0 1 9.5 14H1.3A1.3 1.3 0 0 1 0 12.7V1.3A1.3 1.3 0 0 1 1.3 0Z" fill="#fff"/><path d="M7 0.3V3.8H10.5" stroke="#444" stroke-width="1.2" fill="none"/><rect x="4" y="9.6" width="11" height="5" fill="#444"/><text x="4.2" y="14.2" font-size="4.8" font-weight="700" fill="#fff" font-family="Liberation Sans" letter-spacing="-0.1">XLS</text></svg>
<div class="t" style="left:624.3px;top:701.72px;font-size:11.2px;color:#f0f0f0;font-weight:400">.xls-Download</div>
<div class="a" style="left:727.6px;top:690.3px;width:135.1px;height:34px;border:1px solid #bdbdbd;border-radius:4px"></div>
<svg class="a" style="left:747.8px;top:700px;" width="15" height="14.5" viewBox="0 0 15 14.5"><path d="M1.3 0H6.9L10.8 3.9V12.7A1.3 1.3 0 0 1 9.5 14H1.3A1.3 1.3 0 0 1 0 12.7V1.3A1.3 1.3 0 0 1 1.3 0Z" fill="#fff"/><path d="M7 0.3V3.8H10.5" stroke="#444" stroke-width="1.2" fill="none"/><rect x="4" y="9.6" width="11" height="5" fill="#444"/><text x="4.2" y="14.2" font-size="4.8" font-weight="700" fill="#fff" font-family="Liberation Sans" letter-spacing="-0.1">PDF</text></svg>
<div class="t" style="left:767.7px;top:701.72px;font-size:11.2px;color:#f0f0f0;font-weight:400;letter-spacing:0.2px">.pdf-Download</div>
<div class="a" style="left:873.9px;top:690.3px;width:120px;height:34px;border:1px solid #bdbdbd;border-radius:4px"></div>
<svg class="a" style="left:893.7px;top:700.2px;" width="16" height="14" viewBox="0 0 16 14"><path d="M1.3 0H6.9L10.2 3.3V12.7A1.3 1.3 0 0 1 8.9 14H1.3A1.3 1.3 0 0 1 0 12.7V1.3A1.3 1.3 0 0 1 1.3 0Z" fill="#fff"/><path d="M7 0.3V3.4H10" stroke="#444" stroke-width="0.9" fill="none"/><rect x="5.2" y="7.7" width="5.5" height="1.6" fill="#444"/><path d="M10.2 7.7H12.4V5.8L15.2 8.5L12.4 11.2V9.3H10.2Z" fill="#fff"/></svg>
<div class="t" style="left:913px;top:701.72px;font-size:11.2px;color:#f0f0f0;font-weight:400">FiBu-Export</div>
</body></html>
